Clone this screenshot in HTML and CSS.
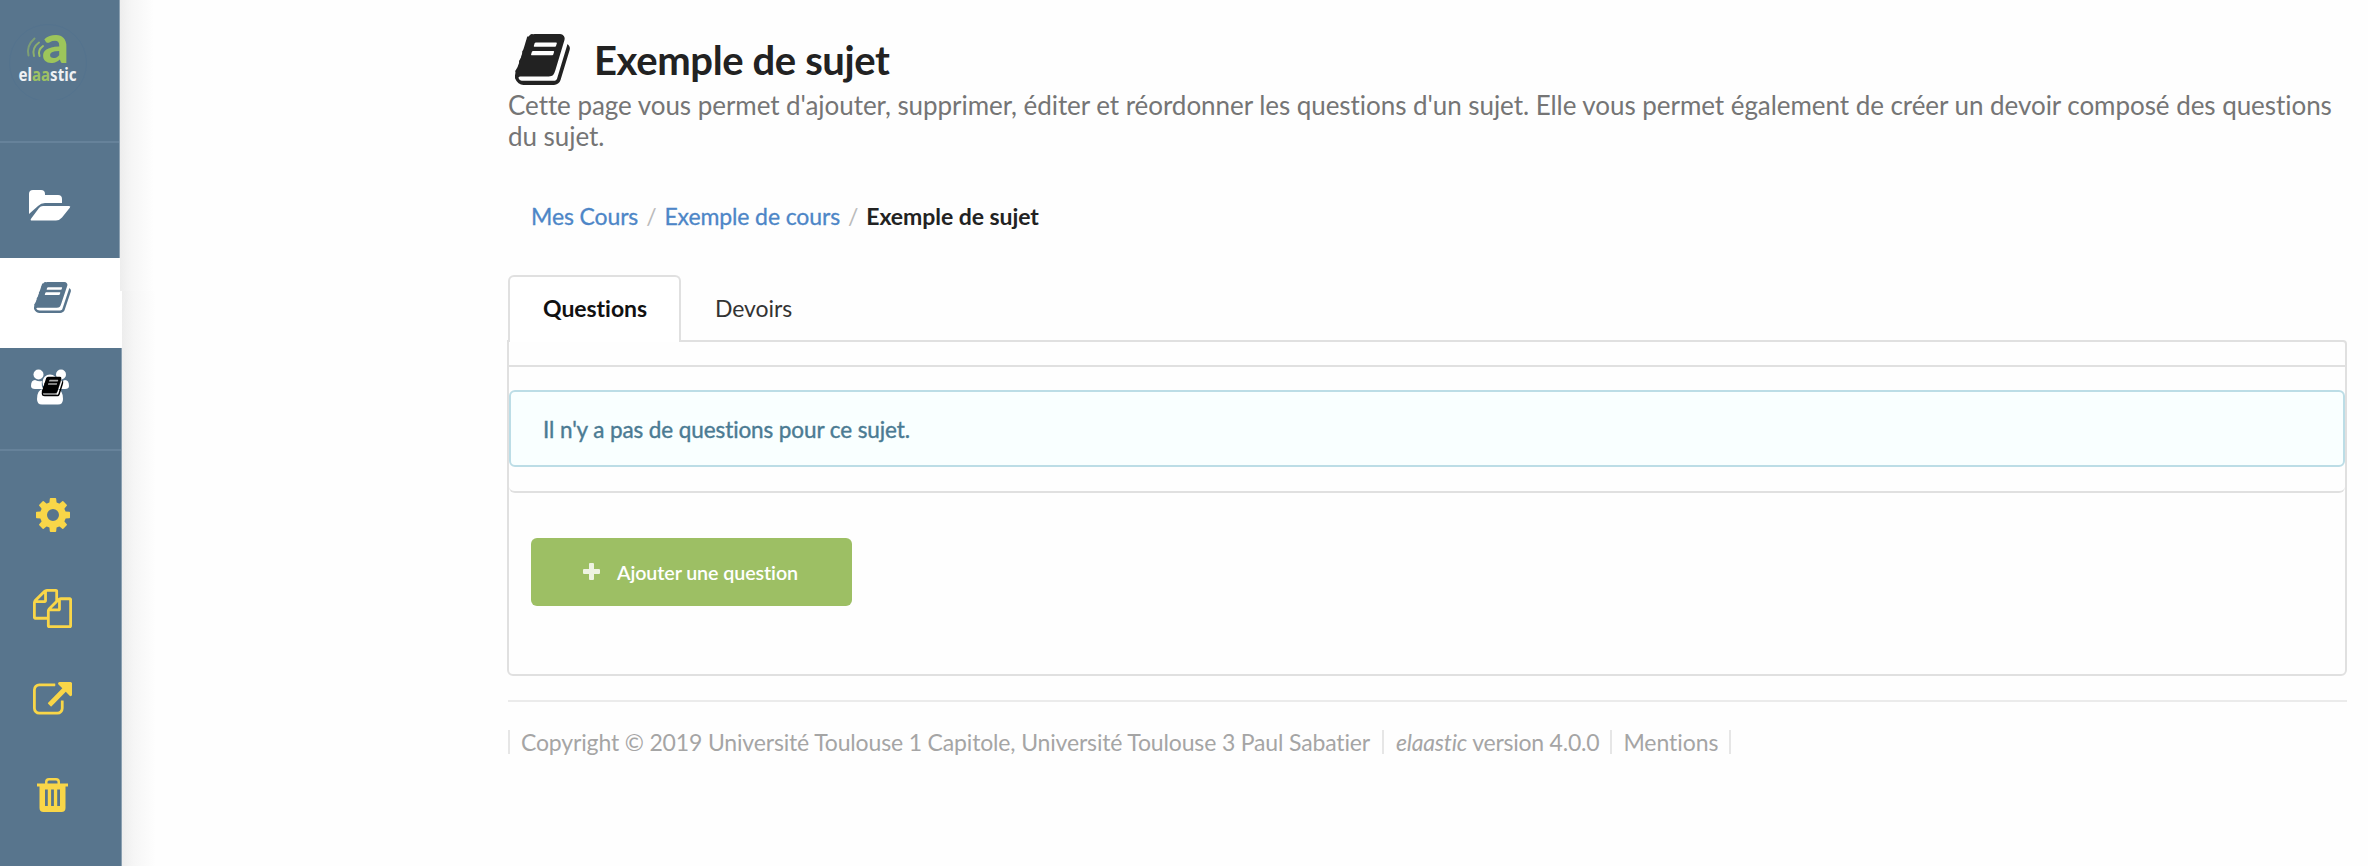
FILE: index.html
```html
<!DOCTYPE html>
<html lang="fr">
<head>
<meta charset="utf-8">
<title>Exemple de sujet - elaastic</title>
<link rel="stylesheet" href="styles.css">
</head>
<body>
<svg class="defs" aria-hidden="true">
  <symbol id="book" viewBox="68 126 1664 1540" preserveAspectRatio="none"><path d="M440 200L130 1230H300L600 200z"/><path d="M1703 478q40 57 18 129l-275 906q-19 64-76.500 107.500t-122.500 43.500h-923q-77 0-148.500-53.500t-99.500-131.500q-24-67-2-127 0-4 3-27t4-37q1-8-3-21.500t-3-19.500q2-11 8-21t16.500-23.500 16.500-23.500q23-38 45-91.500t30-91.500q3-10 .5-30t-.5-28q3-11 17-28t17-23q21-36 42-92t25-90q1-9-2.500-32t.5-28q4-13 22-30.500t22-22.500q19-26 42.500-84.500t27.500-96.500q1-8-3-25.500t-2-26.500q2-8 9-18t18-23 17-21q8-12 16.500-30.500t15-35 16-36 19.500-32 26.500-23.500 36-11.500 47.500 5.500l-1 3q38-9 51-9h761q74 0 114 56t18 130l-274 906q-36 119-71.500 153.500t-128.500 34.500h-869q-27 0-38 15-11 16-1 43 24 70 144 70h923q29 0 56-15.500t35-41.500l300-987q7-22 5-57 38 15 59 43zm-1064 2q-4 13 2 22.500t20 9.500h608q13 0 25.500-9.500t16.500-22.500l21-64q4-13-2-22.500t-20-9.500h-608q-13 0-25.500 9.500t-16.500 22.500zm-83 256q-4 13 2 22.500t20 9.500h608q13 0 25.500-9.500t16.500-22.500l21-64q4-13-2-22.500t-20-9.500h-608q-13 0-25.500 9.500t-16.500 22.500z"/></symbol>
</svg>
<div class="app">
  <aside class="sidebar">
    <div class="band band-top">
      <nav class="menu">
        <a class="logo">
          <svg width="100" height="100" viewBox="0 0 100 100">
            <circle class="halo" cx="48" cy="63" r="38.500"/>
            <g class="waves">
              <path opacity=".55" d="M34.500 38.500Q26 46 28.500 55.500"/>
              <path opacity=".75" d="M39 42.500Q31.500 48 34 56"/>
              <path d="M43 46Q37.500 50 39.500 56"/>
            </g>
            <text class="logo-a" x="42" y="63" textLength="27" lengthAdjust="spacingAndGlyphs">a</text>
            <text class="logo-name" x="18.500" y="80.500" textLength="58" lengthAdjust="spacingAndGlyphs">el<tspan class="green">aa</tspan>stic</text>
          </svg>
        </a>
        <a class="item courses">
          <svg width="44" height="33" viewBox="0 0 44 33"><path d="M1 25V5q0-4 4-4h8q4 0 4 4v1h13q4 0 4 4v4H17q-4 0-7 3zM15 17h26q2 0 .8 1.800L34 28.500Q31.500 31.500 28 31.500H4q-2.300 0-.8-2L11 19q1.500-2 4-2z"/></svg>
        </a>
        <div class="active-start"></div>
      </nav>
      <div class="edge"></div>
    </div>
    <div class="band band-main">
      <nav class="menu">
        <a class="item subject"><svg class="subject-icon" width="37" height="31"><use href="#book"/></svg></a>
        <a class="item assignments">
          <svg width="38" height="36" viewBox="0 0 38 36">
            <circle cx="7.500" cy="5.500" r="5"/><circle cx="30" cy="5.500" r="5"/>
            <path d="M0 17q0-6 4-6 4 2 7 1-1 5 1.500 8H4q-4 0-4-3zM38 17q0-6-4-6-4 2-7 1 1 5-1.500 8H34q4 0 4-3z"/>
            <circle cx="19" cy="13" r="7.500"/><path d="M6 30q0-9 6-10h14q6 1 6 10 0 5.500-5 5.500H11q-5 0-5-5.500z"/>
            <path class="paper" d="M16 9l15 1-6 17H11z"/>
            <use class="black" href="#book" x="10.500" y="7.500" width="22" height="20"/>
          </svg>
        </a>
        <a class="item tool settings">
          <svg width="36" height="36" viewBox="-18 -18 36 36">
            <path fill-rule="evenodd" d="M-13 0a13 13 0 1 0 26 0a13 13 0 1 0-26 0M-6 0a6 6 0 1 0 12 0a6 6 0 1 0-12 0"/>
            <g id="teeth"><path d="M-3.600-12L-3.200-16.300Q-3.100-17-2.400-17H2.400Q3.100-17 3.200-16.300L3.600-12zM-3.600 12L-3.200 16.300Q-3.100 17-2.400 17H2.400Q3.100 17 3.200 16.300L3.600 12zM-12-3.600L-16.300-3.200Q-17-3.100-17-2.400V2.400Q-17 3.100-16.300 3.200L-12 3.600zM12-3.600L16.300-3.200Q17-3.100 17-2.400V2.400Q17 3.100 16.300 3.200L12 3.600z"/></g>
            <use href="#teeth" transform="rotate(45)"/>
          </svg>
        </a>
        <a class="item tool copy">
          <svg width="39" height="39" viewBox="0 0 1792 1792"><path d="M1696 384q40 0 68 28t28 68v1216q0 40-28 68t-68 28h-960q-40 0-68-28t-28-68v-288h-544q-40 0-68-28t-28-68v-672q0-40 20-88t48-76l408-408q28-28 76-48t88-20h416q40 0 68 28t28 68v328q68-40 128-40h416zm-544 213l-299 299h299v-299zm-640-384l-299 299h299v-299zm196 647l316-316v-416h-384v416q0 40-28 68t-68 28h-416v640h512v-256q0-40 20-88t48-76zm956 804v-1152h-384v416q0 40-28 68t-68 28h-416v640h896z"/></svg>
        </a>
        <a class="item tool export">
          <svg width="39" height="34" viewBox="0 128 1792 1536" preserveAspectRatio="none"><path d="M1408 992v320q0 119-84.500 203.500t-203.500 84.500h-832q-119 0-203.500-84.500t-84.500-203.500v-832q0-119 84.500-203.500t203.500-84.500h704q14 0 23 9t9 23v64q0 14-9 23t-23 9h-704q-66 0-113 47t-47 113v832q0 66 47 113t113 47h832q66 0 113-47t47-113v-320q0-14 9-23t23-9h64q14 0 23 9t9 23zm384-800v512q0 26-19 45t-45 19-45-19l-176-176-652 652q-10 10-23 10t-23-10l-114-114q-10-10-10-23t10-23l652-652-176-176q-19-19-19-45t19-45 45-19h512q26 0 45 19t19 45z"/></svg>
        </a>
        <a class="item tool trash">
          <svg width="31" height="34" viewBox="0 0 31 34"><path fill-rule="evenodd" d="M0 5.500h8V4Q8 0 12 0h7q4 0 4 4v1.500h8V8.500H28.500V30q0 4-4 4H6.500q-4 0-4-4V8.500H0zM10.500 5.500h10V4Q20.500 2.500 19 2.500h-7Q10.500 2.500 10.500 4zM8 11.500v16.500h2.800V11.500zM14.100 11.500v16.500h2.800V11.500zM20.200 11.500v16.500h2.800V11.500z"/></svg>
        </a>
      </nav>
      <div class="edge"></div>
    </div>
  </aside>
  <main class="content">
    <header class="head">
      <svg width="55" height="51"><use href="#book"/></svg>
      <h1 class="title">Exemple de sujet</h1>
    </header>
    <p class="desc">Cette page vous permet d'ajouter, supprimer, éditer et réordonner les questions d'un sujet. Elle vous permet également de créer un devoir composé des questions<br>du sujet.</p>
    <nav class="crumbs"><a>Mes Cours</a><span class="slash">/</span><a>Exemple de cours</a><span class="slash">/</span><b>Exemple de sujet</b></nav>
    <div class="tabs"><a class="tab current">Questions</a><a class="tab">Devoirs</a></div>
    <section class="panel">
      <div class="list"><div class="message">Il n'y a pas de questions pour ce sujet.</div></div>
      <button class="add"><svg width="17" height="17" viewBox="0 0 17 17"><path d="M6 1q0-1 1-1h3q1 0 1 1v5h5q1 0 1 1v3q0 1-1 1h-5v5q0 1-1 1H7q-1 0-1-1v-5H1q-1 0-1-1V7q0-1 1-1h5z"/></svg><span>Ajouter une question</span></button>
    </section>
    <footer class="foot"><span class="copyright">Copyright © 2019 Université Toulouse 1 Capitole, Université Toulouse 3 Paul Sabatier</span><span class="version"><i>elaastic</i> version 4.0.0</span><span>Mentions</span></footer>
  </main>
</div>
</body>
</html>
```
FILE: styles.css
```css
* { box-sizing: border-box; }
body { margin: 0; background: #fefefe; font-family: Lato, sans-serif; color: #222; }
.defs { position: absolute; width: 0; height: 0; }
.app { display: flex; height: 866px; overflow: hidden; }

.sidebar { width: 170px; flex: none; display: flex; flex-direction: column; }
.band { display: flex; }
.band-top { height: 291px; }
.band-main { flex: 1; }
.menu { display: flex; flex-direction: column; background: #58758d; border-right: 1px solid #8ba0b1; fill: #fff; }
.band-top .menu { width: 120px; }
.band-main .menu { width: 122px; }
.edge { width: 34px; background: linear-gradient(to right, #ededed, #f6f6f6 35%, #fefefe); }
.item { display: block; }
.item svg, .logo svg { display: block; }
.logo { height: 143px; border-bottom: 2px solid #66829a; }
.halo { fill: none; stroke: #54738e; stroke-width: 1; }
.waves { fill: none; stroke: #9dc163; stroke-width: 2; stroke-linecap: round; }
.logo-a { font: 900 53px Lato, sans-serif; fill: #9dc55b; }
.logo-name { font: 700 17px "Noto Sans", sans-serif; fill: #eef1f4; }
.logo-name .green { fill: #9dc163; }
.courses { height: 115px; padding: 46px 0 0 28px; }
.active-start { flex: 1; background: #fff; margin-right: -1px; }
.subject { height: 57px; background: #fff; margin-right: -1px; fill: #58758d; }
.subject-icon { margin: -9px 0 0 34px; overflow: visible; position: relative; }
.assignments { height: 103px; padding: 21px 0 0 31px; border-bottom: 2px solid #66829a; }
.paper { fill: #aaa; }
.black { fill: #000; }
.tool { fill: #f9d648; }
.settings { padding: 46px 0 0 35px; }
.copy { padding: 56px 0 0 33px; }
.export { padding: 54px 0 0 33px; }
.trash { padding: 62px 0 0 37px; }

.content { margin-left: 338px; width: 1839px; padding-top: 33px; flex: none; }
.head { display: flex; height: 56px; padding-left: 7px; fill: #222; }
.head svg { margin-top: 1px; }
.title { margin: 3px 0 0 24px; font-size: 40px; line-height: 48px; font-weight: 700; letter-spacing: -.38px; white-space: nowrap; }
.desc { margin: 1px 0 0; height: 61px; font-size: 26px; line-height: 31px; letter-spacing: -.05px; color: #757575; white-space: nowrap; }
.crumbs { margin-top: 51px; padding-left: 23px; height: 28px; font-size: 23px; line-height: 28px; letter-spacing: -.12px; color: #4d86c7; -webkit-text-stroke: .3px; display: flex; }
.crumbs b { color: #222; letter-spacing: -.06px; -webkit-text-stroke: 0; }
.slash { color: #bbb; padding: 0 8px; -webkit-text-stroke: 0; }
.tabs { margin-top: 45px; height: 67px; display: flex; position: relative; z-index: 1; font-size: 23px; line-height: 28px; letter-spacing: -.05px; }
.tab { padding: 19px 34px 0; color: #333; }
.current { width: 173px; padding-left: 33px; font-weight: 700; color: #111; background: #fff; border: 2px solid #e0e0e0; border-bottom: 0; border-radius: 6px 6px 0 0; padding-top: 17px; }
.panel { margin: -2px 0 0 -1px; height: 336px; border: 2px solid #e0e0e0; border-radius: 0 4px 6px 6px; padding-top: 23px; }
.list { height: 128px; border: solid #e0e0e0; border-width: 2px 0; border-radius: 0 0 6px 6px; padding-top: 23px; }
.message { height: 77px; border: 2px solid #bcdde6; border-radius: 6px; background: #f9ffff; color: #4b7b93; padding: 24px 0 0 32px; font-size: 22.500px; line-height: 28px; letter-spacing: -.1px; -webkit-text-stroke: .4px; }
.add { display: flex; align-items: flex-start; border: 0; margin: 45px 0 0 22px; width: 321px; height: 68px; padding: 25px 0 0 52px; background: #9dbf64; border-radius: 6px; color: #fff; fill: #eef3e2; font: 600 19.700px/24px Lato, sans-serif; letter-spacing: -.1px; }
.add span { margin: -2px 0 0 17px; }
.foot { margin-top: 24px; border-top: 2px solid #ebebeb; padding-top: 28px; display: flex; font-size: 23px; line-height: 24px; letter-spacing: -.05px; color: #a5a5a5; }
.foot > span { height: 24px; border-right: 2px solid #e6e6e6; padding: 0 11px; }
.foot > .copyright { border-left: 2px solid #e6e6e6; padding: 0 12px 0 11px; letter-spacing: -.155px; }
.foot > .version { padding-left: 12px; letter-spacing: -.22px; }
```
